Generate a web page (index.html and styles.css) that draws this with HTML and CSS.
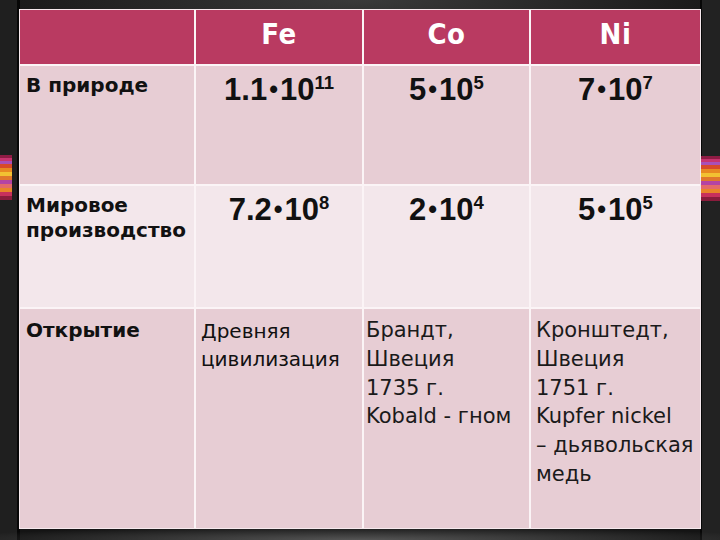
FILE: index.html
```html
<!DOCTYPE html>
<html lang="ru">
<head>
<meta charset="utf-8">
<title>Fe Co Ni</title>
<link rel="stylesheet" href="styles.css">
</head>
<body>
<div class="slide">
  <div class="deco deco-left"></div>
  <div class="deco deco-right"></div>
  <div class="table">
    <div class="cell head"></div>
    <div class="cell head">Fe</div>
    <div class="cell head">Co</div>
    <div class="cell head">Ni</div>

    <div class="cell r1 label">В природе</div>
    <div class="cell r1 num">1.1<span class="dot">•</span>10<span class="sup">11</span></div>
    <div class="cell r1 num">5<span class="dot">•</span>10<span class="sup">5</span></div>
    <div class="cell r1 num">7<span class="dot">•</span>10<span class="sup">7</span></div>

    <div class="cell r2 label">Мировое<br>производство</div>
    <div class="cell r2 num">7.2<span class="dot">•</span>10<span class="sup">8</span></div>
    <div class="cell r2 num">2<span class="dot">•</span>10<span class="sup">4</span></div>
    <div class="cell r2 num">5<span class="dot">•</span>10<span class="sup">5</span></div>

    <div class="cell r3 label label3">Открытие</div>
    <div class="cell r3 plain">Древняя<br>цивилизация</div>
    <div class="cell r3 note note-co">Брандт,<br>Швеция<br>1735 г.<br>Kobald - гном</div>
    <div class="cell r3 note note-ni">Кронштедт,<br>Швеция<br>1751 г.<br>Kupfer nickel<br>– дьявольская<br>медь</div>
  </div>
</div>
</body>
</html>
```
FILE: styles.css
```css
html, body {
  margin: 0;
  padding: 0;
}
body {
  width: 720px;
  height: 540px;
  overflow: hidden;
  background:
    linear-gradient(to right, #1f1f1f 0, #1f1f1f 17px, #070707 17px, #070707 20px, rgba(0,0,0,0) 20px, rgba(0,0,0,0) 700px, #070707 700px, #070707 702px, #222 702px),
    radial-gradient(ellipse 420px 60px at 50% 0, #3a3a3a 0, #141414 100%),
    #0c0c0c;
  font-family: "DejaVu Sans", sans-serif;
}
.slide {
  position: relative;
  width: 720px;
  height: 540px;
  padding: 10px 20px 0 20px;
  box-sizing: border-box;
  background: radial-gradient(ellipse 420px 14px at 50% 540px, #555 0, rgba(40,40,40,0) 100%);
}
.deco {
  position: absolute;
  top: 155px;
  height: 45px;
  background: linear-gradient(to bottom,
    #8e1c44 0 3px, #c83470 3px 6px, #a850b8 6px 9px, #d84a2a 9px 13px,
    #e88a22 13px 17px, #f2c232 17px 21px, #e0782c 21px 25px, #b444a4 25px 29px,
    #e46a6a 29px 33px, #e8842a 33px 37px, #c8305c 37px 41px, #8a1c3c 41px 45px);
}
.deco-left {
  left: 0;
  width: 12px;
}
.deco-right {
  left: 701px;
  width: 19px;
  top: 156px;
}
.table {
  display: grid;
  grid-template-columns: 174px 166px 165px 169px;
  grid-template-rows: 54px 118px 121px 219px;
  gap: 2px;
  width: 680px;
  background: #fbf4f6;
  box-shadow: 0 0 0 1px #f6e9ed;
}
.cell {
  box-sizing: border-box;
  color: #111;
}
.head {
  background: #b93a61;
  color: #fff;
  text-align: center;
  font-family: "DejaVu Sans Condensed", "DejaVu Sans", sans-serif;
  font-stretch: condensed;
  font-weight: bold;
  font-size: 29px;
  padding-top: 7px;
  letter-spacing: 0.5px;
}
.r1, .r3 {
  background: #e7cdd4;
}
.r2 {
  background: #f3e7eb;
}
.label {
  font-weight: bold;
  font-size: 20px;
  line-height: 25px;
  padding: 7px 0 0 6px;
}
.label3 {
  padding-top: 9px;
}
.num {
  font-family: "Liberation Sans", Arial, sans-serif;
  font-weight: bold;
  font-size: 31px;
  line-height: 36px;
  text-align: center;
  padding-top: 6px;
}
.dot {
  font-size: 25px;
  line-height: 0;
  vertical-align: 2px;
  margin: 0 2px;
}
.sup {
  font-size: 18.5px;
  line-height: 0;
  vertical-align: 10.6px;
}
.plain {
  font-size: 20px;
  line-height: 28px;
  padding: 8px 0 0 5px;
}
.note {
  font-size: 21px;
  line-height: 28.8px;
  padding-top: 7px;
  color: #1a1a1a;
}
.note-co {
  padding-left: 2px;
}
.note-ni {
  padding-left: 5px;
}
```
